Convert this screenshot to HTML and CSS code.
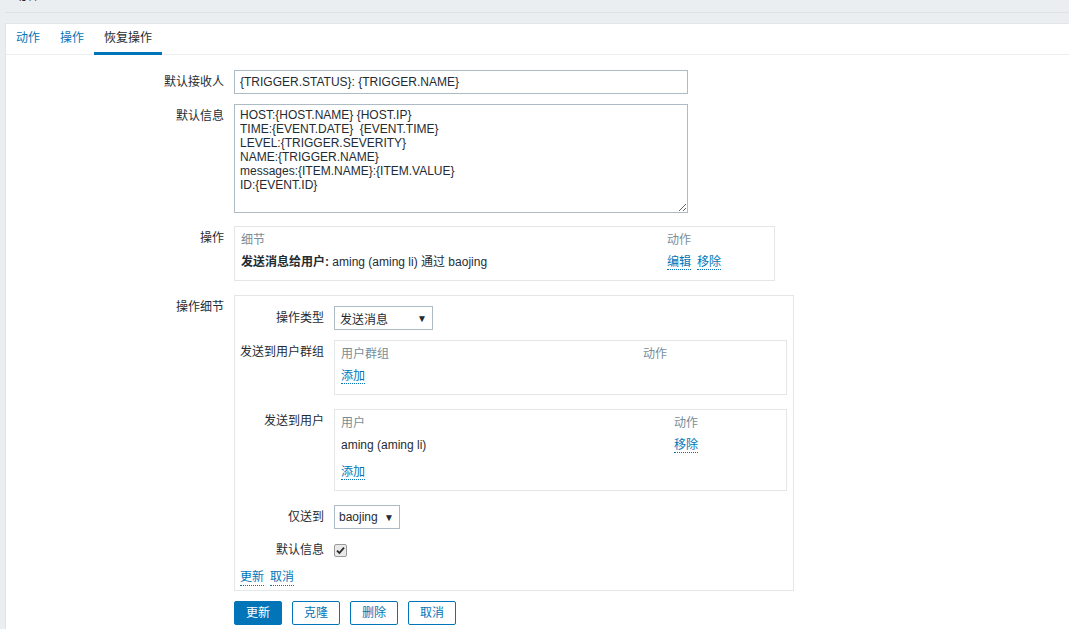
FILE: index.html
```html
<!DOCTYPE html>
<html lang="zh-CN">
<head>
<meta charset="utf-8">
<title>动作</title>
<link rel="stylesheet" href="styles.css">
</head>
<body>
<div class="page">
  <header class="page-header">
    <h1 class="page-title">动作</h1>
  </header>
  <main class="panel">
    <ul class="tabs">
      <li class="tab">动作</li>
      <li class="tab">操作</li>
      <li class="tab tab-active">恢复操作</li>
    </ul>
    <form class="form">
      <div class="row row-subject">
        <label class="label">默认接收人</label>
        <div class="field"><input class="input" type="text" value="{TRIGGER.STATUS}: {TRIGGER.NAME}"></div>
      </div>
      <div class="row row-message">
        <label class="label">默认信息</label>
        <div class="field"><textarea class="textarea">HOST:{HOST.NAME} {HOST.IP}
TIME:{EVENT.DATE}  {EVENT.TIME}
LEVEL:{TRIGGER.SEVERITY}
NAME:{TRIGGER.NAME}
messages:{ITEM.NAME}:{ITEM.VALUE}
ID:{EVENT.ID}</textarea></div>
      </div>
      <div class="row row-ops">
        <label class="label">操作</label>
        <div class="field">
          <div class="box box-ops">
            <div class="trow thead cols-ops"><span>细节</span><span>动作</span></div>
            <div class="trow cols-ops">
              <span><b class="strong">发送消息给用户:</b> aming (aming li) 通过 baojing</span>
              <span class="links"><a class="link">编辑</a><a class="link">移除</a></span>
            </div>
          </div>
        </div>
      </div>
      <div class="row row-details">
        <label class="label">操作细节</label>
        <div class="field">
          <div class="details">
            <div class="irow irow-type">
              <label class="ilabel">操作类型</label>
              <div class="select select-type"><span>发送消息</span><span class="arrow">▼</span></div>
            </div>
            <div class="irow irow-groups">
              <label class="ilabel">发送到用户群组</label>
              <div class="box box-inner">
                <div class="trow thead cols-groups"><span>用户群组</span><span>动作</span></div>
                <div class="trow"><a class="link">添加</a></div>
              </div>
            </div>
            <div class="irow irow-users">
              <label class="ilabel">发送到用户</label>
              <div class="box box-inner">
                <div class="trow thead cols-users"><span>用户</span><span>动作</span></div>
                <div class="trow cols-users"><span>aming (aming li)</span><span><a class="link">移除</a></span></div>
                <div class="trow"><a class="link">添加</a></div>
              </div>
            </div>
            <div class="irow irow-media">
              <label class="ilabel">仅送到</label>
              <div class="select select-media"><span>baojing</span><span class="arrow">▼</span></div>
            </div>
            <div class="irow irow-default">
              <label class="ilabel">默认信息</label>
              <span class="checkbox"><svg width="9" height="9" viewBox="0 0 9 9"><path d="M1 4.6 L3.4 7 L8 1.6" fill="none" stroke="#2b2b2b" stroke-width="1.8"/></svg></span>
            </div>
            <div class="links inner-links"><a class="link">更新</a><a class="link">取消</a></div>
          </div>
        </div>
      </div>
      <div class="actions">
        <button type="button" class="btn btn-primary">更新</button>
        <button type="button" class="btn">克隆</button>
        <button type="button" class="btn">删除</button>
        <button type="button" class="btn">取消</button>
      </div>
    </form>
  </main>
</div>
</body>
</html>
```

FILE: styles.css
```css
html, body {
  margin: 0;
  padding: 0;
  overflow: hidden;
}
body {
  background: #ebeef0;
  color: #1f2c33;
  font-family: "Liberation Sans", Arial, "Noto Sans CJK SC", sans-serif;
  font-size: 12px;
}
.page {
  padding-left: 5px;
}
.page-header {
  padding: 0 0 9px 8px;
  border-bottom: 1px solid #dde2e5;
}
.page-title {
  margin: -15px 0 0 0;
  font-size: 14px;
  line-height: 18px;
  font-weight: normal;
  color: #1f2c33;
}
.panel {
  margin-top: 10px;
  background: #fff;
  border-top: 1px solid #e0e5e8;
  border-left: 1px solid #e0e5e8;
  min-height: 620px;
}
.tabs {
  list-style: none;
  margin: 0;
  padding: 0;
  display: flex;
  border-bottom: 1px solid #ebeef0;
  height: 30px;
}
.tab {
  padding: 1px 10px 0;
  line-height: 27px;
  height: 27px;
  border-bottom: 3px solid transparent;
  color: #0275b8;
  margin-bottom: -1px;
}
.tab-active {
  color: #1f2c33;
  border-bottom-color: #0275b8;
}
.form {
  padding-top: 15px;
}
.row {
  display: flex;
  align-items: flex-start;
}
.label {
  width: 228px;
  box-sizing: border-box;
  padding-right: 10px;
  text-align: right;
  line-height: 24px;
  flex-shrink: 0;
}
.field {
  flex: 1;
}
.row-subject { margin-bottom: 10px; }
.row-message { margin-bottom: 13px; }
.row-ops { margin-bottom: 14px; }
.row-details { margin-bottom: 10px; }

.input {
  display: block;
  width: 454px;
  height: 24px;
  box-sizing: border-box;
  border: 1px solid #acbbc4;
  padding: 0 5px;
  margin: 0;
  font: 12px "Liberation Sans", Arial, "Noto Sans CJK SC", sans-serif;
  color: #1f2c33;
  background: #fff;
  outline: none;
}
.textarea {
  display: block;
  width: 454px;
  height: 109px;
  box-sizing: border-box;
  border: 1px solid #acbbc4;
  padding: 3px 5px;
  margin: 0;
  font: 12px/14px "Liberation Sans", Arial, "Noto Sans CJK SC", sans-serif;
  color: #1f2c33;
  background: #fff;
  outline: none;
  overflow: hidden;
}
.box {
  border: 1px solid #e3e7ea;
  padding: 0 6px 2px 6px;
  box-sizing: border-box;
}
.box-ops { width: 541px; }
.box-inner { width: 453px; }
.trow {
  padding: 4px 0 9px;
  line-height: 14px;
  height: 14px;
}
.thead {
  padding: 6px 0 4px;
  color: #768d99;
}
.cols-ops, .cols-groups, .cols-users {
  display: grid;
}
.cols-ops { grid-template-columns: 426px 1fr; }
.cols-groups { grid-template-columns: 302px 1fr; }
.cols-users { grid-template-columns: 333px 1fr; }
.strong { font-weight: bold; }
.links {
  display: flex;
  gap: 6px;
  height: 14px;
}
.link {
  display: inline-block;
  line-height: 14px;
  height: 14px;
  color: #0275b8;
  border-bottom: 1px dotted #0275b8;
  cursor: pointer;
}
.details {
  width: 560px;
  box-sizing: border-box;
  border: 1px solid #e3e7ea;
  padding: 10px 6px 4px 5px;
}
.irow {
  display: flex;
  align-items: flex-start;
}
.ilabel {
  width: 94px;
  box-sizing: border-box;
  padding-right: 10px;
  text-align: right;
  line-height: 24px;
  flex-shrink: 0;
  white-space: nowrap;
}
.irow-type { margin-bottom: 10px; }
.irow-groups { margin-bottom: 14px; }
.irow-users { margin-bottom: 14px; }
.irow-media { margin-bottom: 9px; }
.irow-default { margin-bottom: 6px; align-items: center; height: 24px; }
.inner-links { height: 18px; }
.inner-links .link { line-height: 18px; height: 17px; }
.select {
  display: flex;
  justify-content: space-between;
  align-items: center;
  height: 24px;
  box-sizing: border-box;
  border: 1px solid #acbbc4;
  background: #fff;
  padding: 0 5px 0 5px;
}
.select-type { width: 99px; }
.select-media { width: 66px; padding-left: 4px; }
.arrow {
  font-size: 10px;
  color: #1f2c33;
}
.checkbox {
  width: 13px;
  height: 13px;
  box-sizing: border-box;
  border: 1px solid #9a9a9a;
  border-radius: 2px;
  background: #e9e9e9;
  display: flex;
  align-items: center;
  justify-content: center;
}
.actions {
  display: flex;
  gap: 10px;
  padding-left: 228px;
}
.btn {
  height: 24px;
  box-sizing: border-box;
  padding: 0 11px;
  border: 1px solid #0275b8;
  border-radius: 2px;
  background: #fff;
  color: #0275b8;
  font: 12px/22px "Liberation Sans", Arial, "Noto Sans CJK SC", sans-serif;
  margin: 0;
}
.btn-primary {
  background: #0275b8;
  color: #fff;
}
```
